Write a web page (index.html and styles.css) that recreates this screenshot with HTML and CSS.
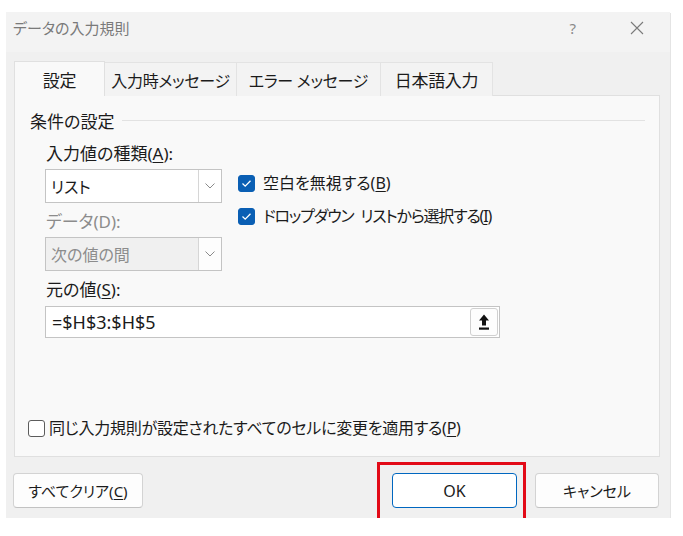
FILE: index.html
```html
<!DOCTYPE html>
<html lang="ja">
<head>
<meta charset="utf-8">
<title>データの入力規則</title>
<link rel="stylesheet" href="styles.css">
</head>
<body>
<div class="dialog">
  <div class="titlebar">
    <span class="title">データの入力規則</span>
    <div class="title-buttons">
      <span class="help">?</span>
      <span class="close">
        <svg width="14" height="14" viewBox="0 0 14 14"><path d="M1 1L13 13M13 1L1 13" stroke="#7a7a7a" stroke-width="1.1" fill="none"/></svg>
      </span>
    </div>
  </div>

  <div class="tabs">
    <div class="tab active t1">設定</div>
    <div class="tab t2">入力時メッセージ</div>
    <div class="tab t3">エラー メッセージ</div>
    <div class="tab t4">日本語入力</div>
  </div>

  <div class="panel">
    <div class="group-head">
      <span class="group-title">条件の設定</span>
      <span class="rule"></span>
    </div>

    <div class="group-body">
      <div class="label type-label">入力値の種類(<u>A</u>):</div>

      <div class="select type-select">
        <span class="value">リスト</span>
        <span class="drop">
          <svg width="10" height="6" viewBox="0 0 10 6"><path d="M0.5 0.5L5 5L9.5 0.5" stroke="#8a8a8a" stroke-width="1" fill="none"/></svg>
        </span>
      </div>

      <div class="checks">
        <div class="check">
          <span class="box checked">
            <svg width="11" height="9" viewBox="0 0 11 9"><path d="M1.5 4.5L4.2 7.2L9.5 1.8" stroke="#fff" stroke-width="1.3" fill="none"/></svg>
          </span>
          <span>空白を無視する(<u>B</u>)</span>
        </div>
        <div class="check">
          <span class="box checked">
            <svg width="11" height="9" viewBox="0 0 11 9"><path d="M1.5 4.5L4.2 7.2L9.5 1.8" stroke="#fff" stroke-width="1.3" fill="none"/></svg>
          </span>
          <span class="tight">ドロップダウン リストから選択する(<u>I</u>)</span>
        </div>
      </div>

      <div class="label disabled data-label">データ(D):</div>
      <div class="select disabled data-select">
        <span class="value">次の値の間</span>
        <span class="drop">
          <svg width="10" height="6" viewBox="0 0 10 6"><path d="M0.5 0.5L5 5L9.5 0.5" stroke="#8a8a8a" stroke-width="1" fill="none"/></svg>
        </span>
      </div>

      <div class="label source-label">元の値(<u>S</u>):</div>
      <div class="source">
        <span class="value">=$H$3:$H$5</span>
        <span class="ref-btn">
          <svg width="12" height="18" viewBox="0 0 12 18"><path d="M6 1.5L11 7.5H8V12.5H4V7.5H1Z" fill="#111"/><rect x="1" y="14.5" width="10" height="2.2" fill="#111"/></svg>
        </span>
      </div>
    </div>

    <div class="check apply">
      <span class="box"></span>
      <span class="apply-text">同じ入力規則が設定されたすべてのセルに変更を適用する(<u>P</u>)</span>
    </div>
  </div>

  <div class="footer">
    <button class="btn clear">すべてクリア(<u>C</u>)</button>
    <div class="ok-wrap">
      <button class="btn primary">OK</button>
    </div>
    <button class="btn cancel">キャンセル</button>
  </div>
</div>
</body>
</html>
```

FILE: styles.css
```css
* {
  box-sizing: border-box;
}

body {
  margin: 0;
  background: #ffffff;
  font-family: "Noto Sans", "Noto Sans CJK JP", sans-serif;
  font-feature-settings: "palt" 1;
  color: #1b1b1b;
  font-size: 16px;
}

u {
  text-underline-offset: 2px;
}

.dialog {
  margin: 12px 0 0 6px;
  width: 664px;
  height: 506px;
  background: #f0f0f0;
  box-shadow: 1px 1px 0 #e4e4e4;
  display: flex;
  flex-direction: column;
}

/* title bar */
.titlebar {
  height: 40px;
  background: #f3f3f3;
  display: flex;
  align-items: flex-start;
  padding: 7px 0 0 7px;
}

.title {
  font-size: 15px;
  line-height: 18px;
  color: #7a7a7a;
  flex: 1;
}

.title-buttons {
  display: flex;
  align-items: center;
  height: 18px;
}

.help {
  color: #8a8a8a;
  font-size: 15px;
  line-height: 18px;
  margin-right: 54px;
}

.close {
  display: flex;
  margin-right: 26px;
}

/* tabs */
.tabs {
  display: flex;
  margin: 9px 0 0 8px;
  height: 34px;
  position: relative;
  z-index: 1;
}

.tab {
  height: 34px;
  display: flex;
  align-items: center;
  justify-content: center;
  font-size: 16px;
  letter-spacing: -0.3px;
  background: #f3f3f3;
  border: 1px solid #e3e3e3;
  border-bottom: none;
  margin-top: 1px;
  color: #1b1b1b;
}

.tab + .tab {
  border-left: none;
}

.tab.active {
  background: #f9f9f9;
  margin-top: 0;
  height: 35px;
  border-color: #e0e0e0;
  font-size: 17px;
}

.t1 { width: 91px; }
.t2 { width: 132px; }
.t3 { width: 144px; }
.t4 { width: 112px; font-size: 17px; }

/* tab page */
.panel {
  margin: 0 10px 0 8px;
  height: 362px;
  background: #f9f9f9;
  border: 1px solid #e0e0e0;
  display: flex;
  flex-direction: column;
  padding: 16px 14px 0 15px;
}

.group-head {
  display: flex;
  align-items: center;
  height: 20px;
}

.group-title {
  font-size: 17px;
  line-height: 20px;
}

.rule {
  flex: 1;
  height: 1px;
  background: #e2e2e2;
  margin: 0 0 0 8px;
  position: relative;
  top: -2px;
}

.group-body {
  padding-left: 15px;
  padding-top: 12px;
  display: grid;
  grid-template-columns: 177px auto;
  column-gap: 16px;
  justify-content: start;
}

.label {
  font-size: 17px;
  line-height: 20px;
  padding-left: 1px;
  grid-column: 1 / -1;
}

.label.disabled {
  color: #8c8c8c;
  grid-column: 1;
}

.type-label { grid-row: 1; }
.type-select { grid-row: 2; grid-column: 1; margin-top: 5px; }
.checks { grid-row: 2 / span 3; grid-column: 2; }
.data-label { grid-row: 3; margin-top: 9px; }
.data-select { grid-row: 4; grid-column: 1; margin-top: 5px; }
.source-label { grid-row: 5; margin-top: 9px; }
.source { grid-row: 6; grid-column: 1 / -1; margin-top: 6px; }

.select {
  width: 177px;
  height: 34px;
  background: #ffffff;
  border: 1px solid #c4c4c4;
  display: flex;
  align-items: stretch;
}

.select .value {
  flex: 1;
  padding-left: 5px;
  display: flex;
  align-items: center;
}

.select .drop {
  width: 23px;
  border-left: 1px solid #d6d6d6;
  display: flex;
  align-items: center;
  justify-content: center;
}

.select.disabled {
  background: #f0f0f0;
  color: #8c8c8c;
}

.select.disabled .drop {
  background: #fdfdfd;
}

.checks {
  display: flex;
  flex-direction: column;
  gap: 14px;
  margin-top: 10px;
  align-self: start;
}

.check {
  display: flex;
  align-items: center;
  gap: 8px;
  line-height: 19px;
}

.tight {
  letter-spacing: -1.2px;
  word-spacing: 4px;
}

.box {
  width: 17px;
  height: 17px;
  border-radius: 3px;
  border: 1px solid #5c5c5c;
  background: #ffffff;
  display: flex;
  align-items: center;
  justify-content: center;
  flex: none;
}

.box.checked {
  background: #0a5fb4;
  border-color: #0a5fb4;
}

.source {
  width: 455px;
  height: 32px;
  background: #ffffff;
  border: 1px solid #c4c4c4;
  display: flex;
  align-items: center;
  padding: 1px;
}

.source .value {
  flex: 1;
  padding-left: 5px;
  font-size: 18px;
}

.ref-btn {
  width: 28px;
  height: 28px;
  border: 1px solid #d0d0d0;
  border-radius: 3px;
  background: #fdfdfd;
  display: flex;
  align-items: center;
  justify-content: center;
}

.check.apply {
  margin-top: auto;
  margin-bottom: 18px;
  margin-left: -2px;
  gap: 4px;
}

.apply-text {
  letter-spacing: -0.25px;
}

/* bottom buttons */
.footer {
  display: flex;
  align-items: flex-start;
  padding: 16px 11px 0 7px;
}

.btn {
  font: inherit;
  font-size: 15px;
  height: 35px;
  background: #fdfdfd;
  border: 1px solid #d3d3d3;
  border-bottom-color: #c2c2c2;
  border-radius: 4px;
  color: #1b1b1b;
  padding: 0;
}

.btn.clear {
  width: 130px;
}

.ok-wrap {
  margin-left: auto;
  position: relative;
}

.btn.primary {
  width: 125px;
  border: 1px solid #0067c0;
  background: #ffffff;
  font-size: 16px;
}

/* highlight frame drawn around the OK button */
.ok-wrap::after {
  content: "";
  position: absolute;
  left: -15px;
  right: -9px;
  top: -11px;
  bottom: -13px;
  border: 3px solid #e20a17;
  pointer-events: none;
}

.btn.cancel {
  width: 124px;
  margin-left: 18px;
}
```
